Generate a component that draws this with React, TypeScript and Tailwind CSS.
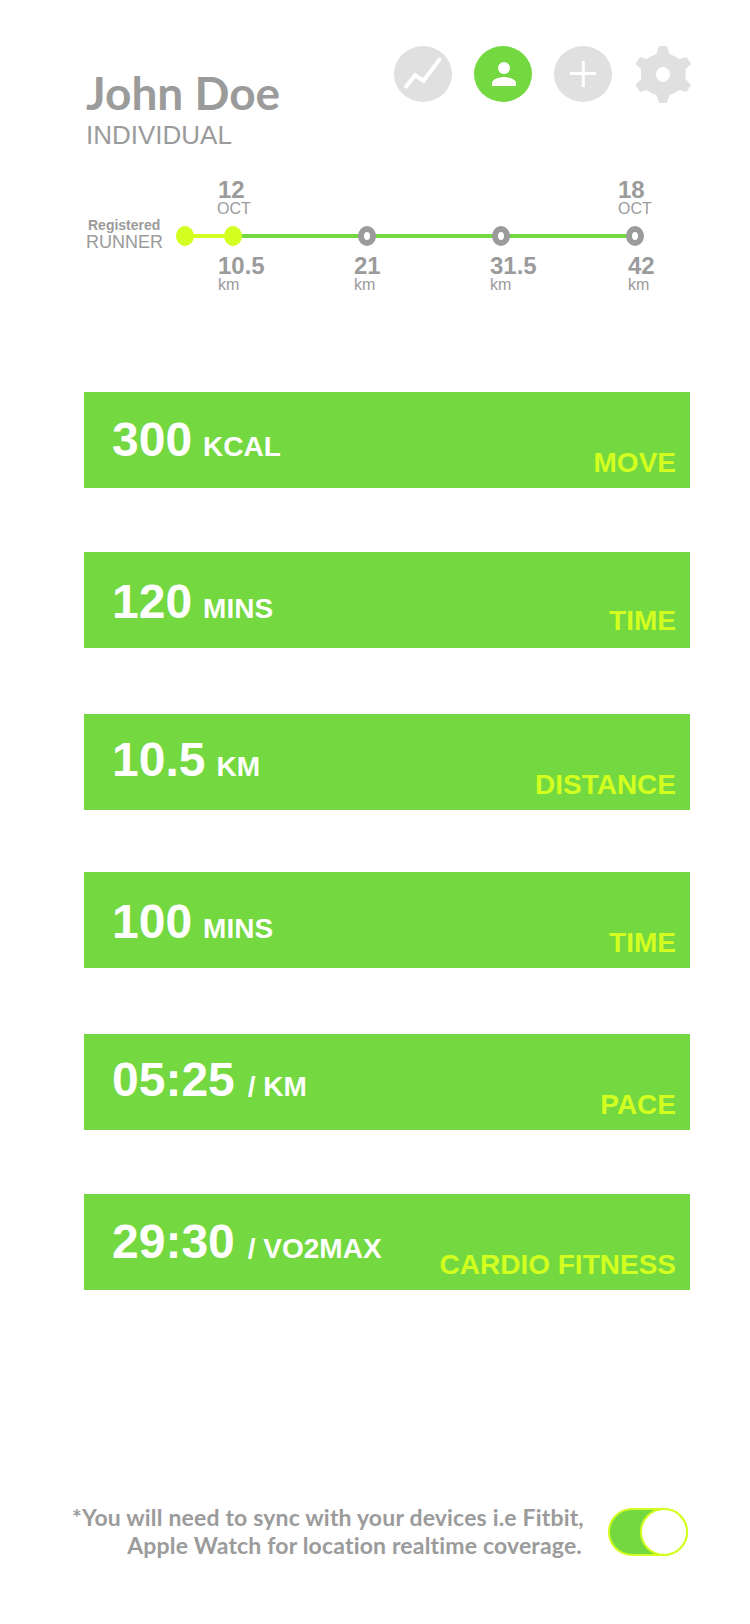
import React from "react";

interface Stat {
  value: string;
  unit: string;
  label: string;
  gap: string;
  valueTop: string;
  labelTop: string;
  unitGap: string;
}

const STATS: Stat[] = [
  { value: "300", unit: "KCAL", label: "MOVE", gap: "", valueTop: "mt-[21px]", labelTop: "mt-[55px]", unitGap: "ml-[11px]" },
  { value: "120", unit: "MINS", label: "TIME", gap: "mt-[64px]", valueTop: "mt-[23px]", labelTop: "mt-[53px]", unitGap: "ml-[11px]" },
  { value: "10.5", unit: "KM", label: "DISTANCE", gap: "mt-[66px]", valueTop: "mt-[19px]", labelTop: "mt-[55px]", unitGap: "ml-[11px]" },
  { value: "100", unit: "MINS", label: "TIME", gap: "mt-[62px]", valueTop: "mt-[23px]", labelTop: "mt-[55px]", unitGap: "ml-[11px]" },
  { value: "05:25", unit: "/ KM", label: "PACE", gap: "mt-[66px]", valueTop: "mt-[19px]", labelTop: "mt-[55px]", unitGap: "ml-[13px]" },
  { value: "29:30", unit: "/ VO2MAX", label: "CARDIO FITNESS", gap: "mt-[64px]", valueTop: "mt-[21px]", labelTop: "mt-[55px]", unitGap: "ml-[13px]" },
];

const NavIcons: React.FC = () => {
  return (
    <nav className="flex ml-auto mt-[46px] mr-[58px]">
      <button className="w-[58px] h-14 mr-[22px]">
        <svg viewBox="0 0 58 56" className="w-[58px] h-14">
          <ellipse cx="29" cy="28" rx="29" ry="28" fill="#e0e0e0" />
          <path d="M12 40.5L21 29.2L29.5 34.7L45.5 13.5" fill="none" stroke="#fff" strokeWidth="4" strokeLinecap="round" />
        </svg>
      </button>
      <button className="w-[58px] h-14 mr-[22px]">
        <svg viewBox="0 0 58 56" className="w-[58px] h-14">
          <ellipse cx="29" cy="28" rx="29" ry="28" fill="#74d841" />
          <circle cx="30" cy="22" r="6" fill="#fff" />
          <path d="M18 40V37C18 33 26 31 30 31S42 33 42 37V40Z" fill="#fff" />
        </svg>
      </button>
      <button className="w-[58px] h-14 mr-[23px]">
        <svg viewBox="0 0 58 56" className="w-[58px] h-14">
          <ellipse cx="29" cy="28" rx="29" ry="28" fill="#e0e0e0" />
          <path d="M16 27.5H42M29.3 15V41" stroke="#fff" strokeWidth="3" />
        </svg>
      </button>
      <button className="w-[57px] h-[58px]">
        <svg viewBox="0 0 57 58" className="w-[57px] h-[58px]">
          <path
            fillRule="evenodd"
            fill="#e0e0e0"
            d="M24 0H32L34.5 8Q40 10 44.500 13L51.500 11L56 18L50.500 23V33L56 39L51.500 46L44.500 44Q40 47.500 34.500 49L32 57H24L21.500 49Q16 47.500 11.500 44L5 46L.500 39L6 33V23L.500 18L5 11L11.500 13Q16 10 21.500 8ZM28 21A7 7.500 0 1 0 28 36A7 7.500 0 1 0 28 21Z"
          />
        </svg>
      </button>
    </nav>
  );
};

interface MarkProps {
  top: string;
  bottom: string;
  className: string;
}

const Mark: React.FC<MarkProps> = ({ top, bottom, className }) => {
  return (
    <div className={`absolute ${className}`}>
      <div className="text-[24px] leading-[24px] font-bold">{top}</div>
      <div className="text-[16px] leading-[14px]">{bottom}</div>
    </div>
  );
};

const Timeline: React.FC = () => {
  return (
    <section className="relative h-[130px] ml-[85px] mt-[20px]">
      <div className="absolute left-[2px] top-[47px]">
        <div className="text-[14px] leading-[16px] font-bold ml-[1px]">Registered</div>
        <div className="text-[18px] leading-[18px] -ml-px">RUNNER</div>
      </div>
      <svg viewBox="0 0 468 20" className="absolute left-[91px] top-[56px] w-[468px] h-5">
        <path d="M9 10H57" stroke="#d2ff1f" strokeWidth="4" />
        <path d="M57 10H459" stroke="#74d841" strokeWidth="4" />
        <ellipse cx="9" cy="10" rx="9" ry="10" fill="#d2ff1f" />
        <ellipse cx="57" cy="10" rx="9" ry="10" fill="#d2ff1f" />
        {[191, 325, 459].map((x) => (
          <g key={x}>
            <ellipse cx={x} cy="10" rx="9" ry="10" fill="#9b9b9b" />
            <ellipse cx={x} cy="10" rx="3" ry="4" fill="#fff" />
          </g>
        ))}
      </svg>
      <Mark top="12" bottom="OCT" className="left-[132px] top-[8px] [&>div:first-child]:ml-px" />
      <Mark top="18" bottom="OCT" className="left-[533px] top-[8px]" />
      <Mark top="10.5" bottom="km" className="left-[133px] top-[84px]" />
      <Mark top="21" bottom="km" className="left-[269px] top-[84px]" />
      <Mark top="31.5" bottom="km" className="left-[405px] top-[84px]" />
      <Mark top="42" bottom="km" className="left-[543px] top-[84px]" />
    </section>
  );
};

const StatBar: React.FC<{ stat: Stat }> = ({ stat }) => {
  return (
    <div className={`flex justify-between items-start h-24 bg-[#74d841] pl-[28px] pr-[14px] font-bold whitespace-nowrap ${stat.gap}`}>
      <div className={`flex items-baseline text-[48px] leading-[54px] text-white ${stat.valueTop}`}>
        {stat.value}
        <span className={`text-[28px] ${stat.unitGap}`}>{stat.unit}</span>
      </div>
      <div className={`text-[28px] leading-[32px] text-[#d2ff1f] ${stat.labelTop}`}>{stat.label}</div>
    </div>
  );
};

export default function App() {
  return (
    <main className="w-[750px] h-[1624px] bg-white overflow-hidden text-[#9b9b9b] font-['Liberation_Sans',Arial,sans-serif]">
      <header className="flex items-start h-[150px]">
        <div className="ml-[86px] mt-[68px] whitespace-nowrap">
          <h1 className="text-[46px] leading-[50px] font-bold font-['Lato',sans-serif]">John Doe</h1>
          <p className="text-[26px] leading-[30px] mt-[2px]">INDIVIDUAL</p>
        </div>
        <NavIcons />
      </header>

      <Timeline />

      <section className="w-[606px] ml-[84px] mt-[92px]">
        {STATS.map((stat, index) => (
          <StatBar key={index} stat={stat} />
        ))}
      </section>

      <footer className="flex mt-[213px] ml-[72px]">
        <p className="w-[510px] text-right text-[23px] leading-[28px] tracking-[0.17px] font-bold whitespace-nowrap font-['Lato',sans-serif]">
          *You will need to sync with your devices i.e Fitbit,
          <br />
          Apple Watch for location realtime coverage.
        </p>
        <button className="ml-[26px] mt-[5px] flex justify-end w-20 h-12 rounded-full bg-[#74d841] border-2 border-[#d2ff1f]">
          <span className="w-12 h-12 -mt-[2px] -mr-[2px] rounded-full bg-white border-2 border-[#d2ff1f]" />
        </button>
      </footer>
    </main>
  );
}
